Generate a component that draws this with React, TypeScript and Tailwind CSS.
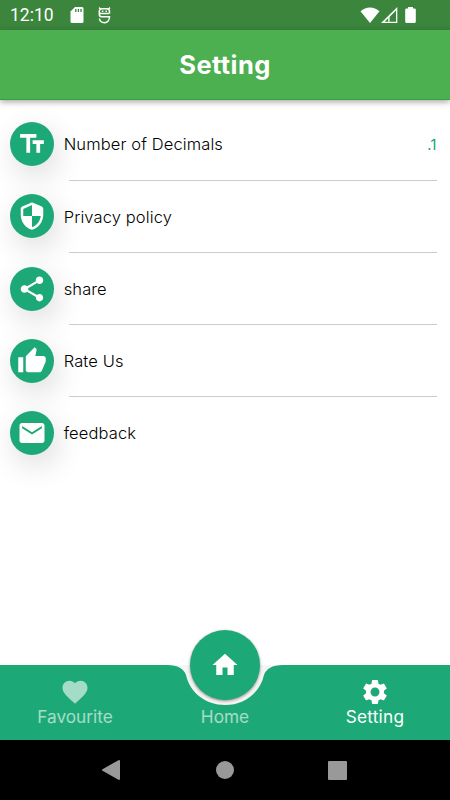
import React from "react";
import { MdTextFields, MdShare, MdThumbUp, MdHome, MdFavorite, MdSettings } from "react-icons/md";

const ShieldIcon = () => (
    <svg width="30" height="30" viewBox="0 0 24 24" fill="currentColor">
        <path d="M11.190 1.360l-7 3.110C3.470 4.790 3 5.510 3 6.300V11c0 5.550 3.840 10.740 9 12 5.160-1.260 9-6.450 9-12V6.300c0-.79-.47-1.510-1.190-1.830l-7-3.110c-.51-.23-1.110-.23-1.620 0zM12 11.990h7c-.53 4.120-3.280 7.790-7 8.940V12H5V6.300l7-3.110v8.800z"/>
    </svg>
);

const MailIcon = () => (
    <svg width="30" height="30" viewBox="0 0 24 24" fill="currentColor">
        <path d="M20 4H4c-1.100 0-2 .9-2 2v12c0 1.100.9 2 2 2h16c1.100 0 2-.9 2-2V6c0-1.100-.9-2-2-2zm-.1 4.100L12 13.100 4.100 8.100V6.400L12 11.300l7.900-4.900z"/>
    </svg>
);

interface SettingRowProps {
    icon: React.ReactNode;
    label: string;
    value?: string;
    last?: boolean;
}

const SettingRow = ({icon, label, value, last}: SettingRowProps) => {
    return (
        <div className="flex h-[72.15px] pl-[9.8px] pr-[13px]">
            <div className="mt-[14.3px] flex size-11 shrink-0 items-center justify-center rounded-full bg-[#1ca977] text-white shadow-[4px_10px_30px_rgba(0,0,0,0.14)]">
                {icon}
            </div>
            <div className="ml-[9.9px] flex flex-1 flex-col">
                <div className="flex h-[71.8px] shrink-0 items-center justify-between pt-[1.8px]">
                    <span className="text-[16.5px] font-light tracking-[0.12px] text-black">{label}</span>
                    {value && <span className="text-[14.5px] tracking-[0.5px] text-[#10a56f]">{value}</span>}
                </div>
                {!last && <div className="ml-[5px] h-px shrink-0 bg-[#cccccc]"/>}
            </div>
        </div>
    );
}

const StatusBar = () => {
    return (
        <div className="flex h-[30px] items-center bg-[#3b853d] pl-2.5 pr-[34px] text-white">
            <span className="w-[60px] pt-px font-['Roboto',sans-serif] text-[17.5px]">12:10</span>
            <svg width="14" height="16" viewBox="0 0 14 16" fill="none">
                <path d="M5 0h7a1.500 1.500 0 0 1 1.500 1.500v13A1.500 1.500 0 0 1 12 16H2a1.500 1.500 0 0 1-1.500-1.500V4.500z" fill="white"/>
                <path d="M5.800 2v3M8.400 2v3M11 2v3" stroke="#3b853d" strokeWidth="1.300"/>
            </svg>
            <svg className="ml-[14px]" width="13" height="17" viewBox="0 0 13 17" fill="none" stroke="white" strokeWidth="1.500">
                <path d="M1 .6 2.800 2.200M12 .6 10.200 2.200"/>
                <path d="M11.300 6.600H3.800C2.300 6.600 1.200 5.900 1.200 4.600 1.200 2.800 2.600 1.800 4.300 1.800h4.400c1.700 0 2.800 1 2.800 2.800v1.900M1.300 6v1.600c0 1.500.9 2.200 2.300 2.200h7.900c0 3.300-2 5.900-5 5.900-2.700 0-4.700-1.700-5.100-4.200"/>
                <path d="M4.600 3.400v1.500M8.200 3.400v1.500"/>
            </svg>
            <svg className="ml-auto" width="20" height="16" viewBox="0 0 20 16">
                <path d="M0.500 4.300C6-.9 14-.9 19.500 4.300L10 16z" fill="white"/>
            </svg>
            <svg className="ml-px" width="17" height="16" viewBox="0 0 17 16">
                <path d="M0 16 16.300 0v16z" fill="white"/>
                <path d="M3.700 14.700 15 3.600v11.100z" fill="#3b853d"/>
                <path d="M7.200 14.700V9.500l1.400-1v6.200z" fill="white"/>
            </svg>
            <svg className="ml-[7px]" width="11" height="16" viewBox="0 0 11 16">
                <path d="M3 0h5v1.500h1.500A1.300 1.300 0 0 1 10.800 2.800v11.700A1.500 1.500 0 0 1 9.300 16H1.700A1.500 1.500 0 0 1 .2 14.500V2.800A1.300 1.300 0 0 1 1.500 1.500H3z" fill="white"/>
            </svg>
        </div>
    );
}

const BottomBar = () => {
    return (
        <div className="relative h-[75px]">
            <svg className="absolute inset-0" width="450" height="75" viewBox="0 0 450 75">
                <rect width="120" height="42" x="165" fill="#f5f5f5"/>
                <path d="M0 0H167C178 0 184 4 186 10C190 28 206 40 225 40S260 28 264 10C266 4 272 0 283 0H450V75H0z" fill="#1ca977"/>
            </svg>
            <div className="absolute -top-[35px] left-[190px] flex size-[70px] items-center justify-center rounded-full bg-[#1ca977] text-white shadow-[0_1px_3px_rgba(0,0,0,0.45)]">
                <MdHome size={30}/>
            </div>
            <div className="relative grid h-full grid-cols-3 pt-3 text-[17.25px] leading-5 text-white">
                <div className="flex flex-col items-center opacity-60">
                    <MdFavorite size={30}/>
                    <span>Favourite</span>
                </div>
                <div className="flex flex-col items-center pt-[30px]">
                    <span className="opacity-60">Home</span>
                </div>
                <div className="flex flex-col items-center">
                    <MdSettings size={30}/>
                    <span className="tracking-[0.2px]">Setting</span>
                </div>
            </div>
        </div>
    );
}

const SystemBar = () => {
    return (
        <div className="flex h-[60px] items-center bg-black">
            <svg className="ml-[102px]" width="18" height="20" viewBox="0 0 18 20">
                <path d="M1 10 17 1v18z" fill="#999999" stroke="#999999" strokeWidth="2" strokeLinejoin="round"/>
            </svg>
            <div className="ml-24 size-[18px] rounded-full bg-[#999999]"/>
            <div className="ml-[94px] size-[19px] rounded-[1px] bg-[#999999]"/>
        </div>
    );
}

const App = () => {
    return (
        <div className="flex h-[800px] w-[450px] flex-col overflow-hidden bg-white font-['Inter',sans-serif]">
            <StatusBar/>
            <header className="z-10 flex h-[70px] items-center justify-center border-b border-[#36a03c] bg-[#4caf50] pt-0.5 shadow-[0_2px_6px_rgba(0,0,0,0.35)]">
                <h1 className="text-[25.5px] font-bold tracking-[0.4px] text-white">Setting</h1>
            </header>
            <main className="flex-1 pt-2">
                <SettingRow icon={<MdTextFields size={30}/>} label="Number of Decimals" value=".1"/>
                <SettingRow icon={<ShieldIcon/>} label="Privacy policy"/>
                <SettingRow icon={<MdShare size={30}/>} label="share"/>
                <SettingRow icon={<MdThumbUp size={30}/>} label="Rate Us"/>
                <SettingRow icon={<MailIcon/>} label="feedback" last/>
            </main>
            <BottomBar/>
            <SystemBar/>
        </div>
    );
}

export default App;
